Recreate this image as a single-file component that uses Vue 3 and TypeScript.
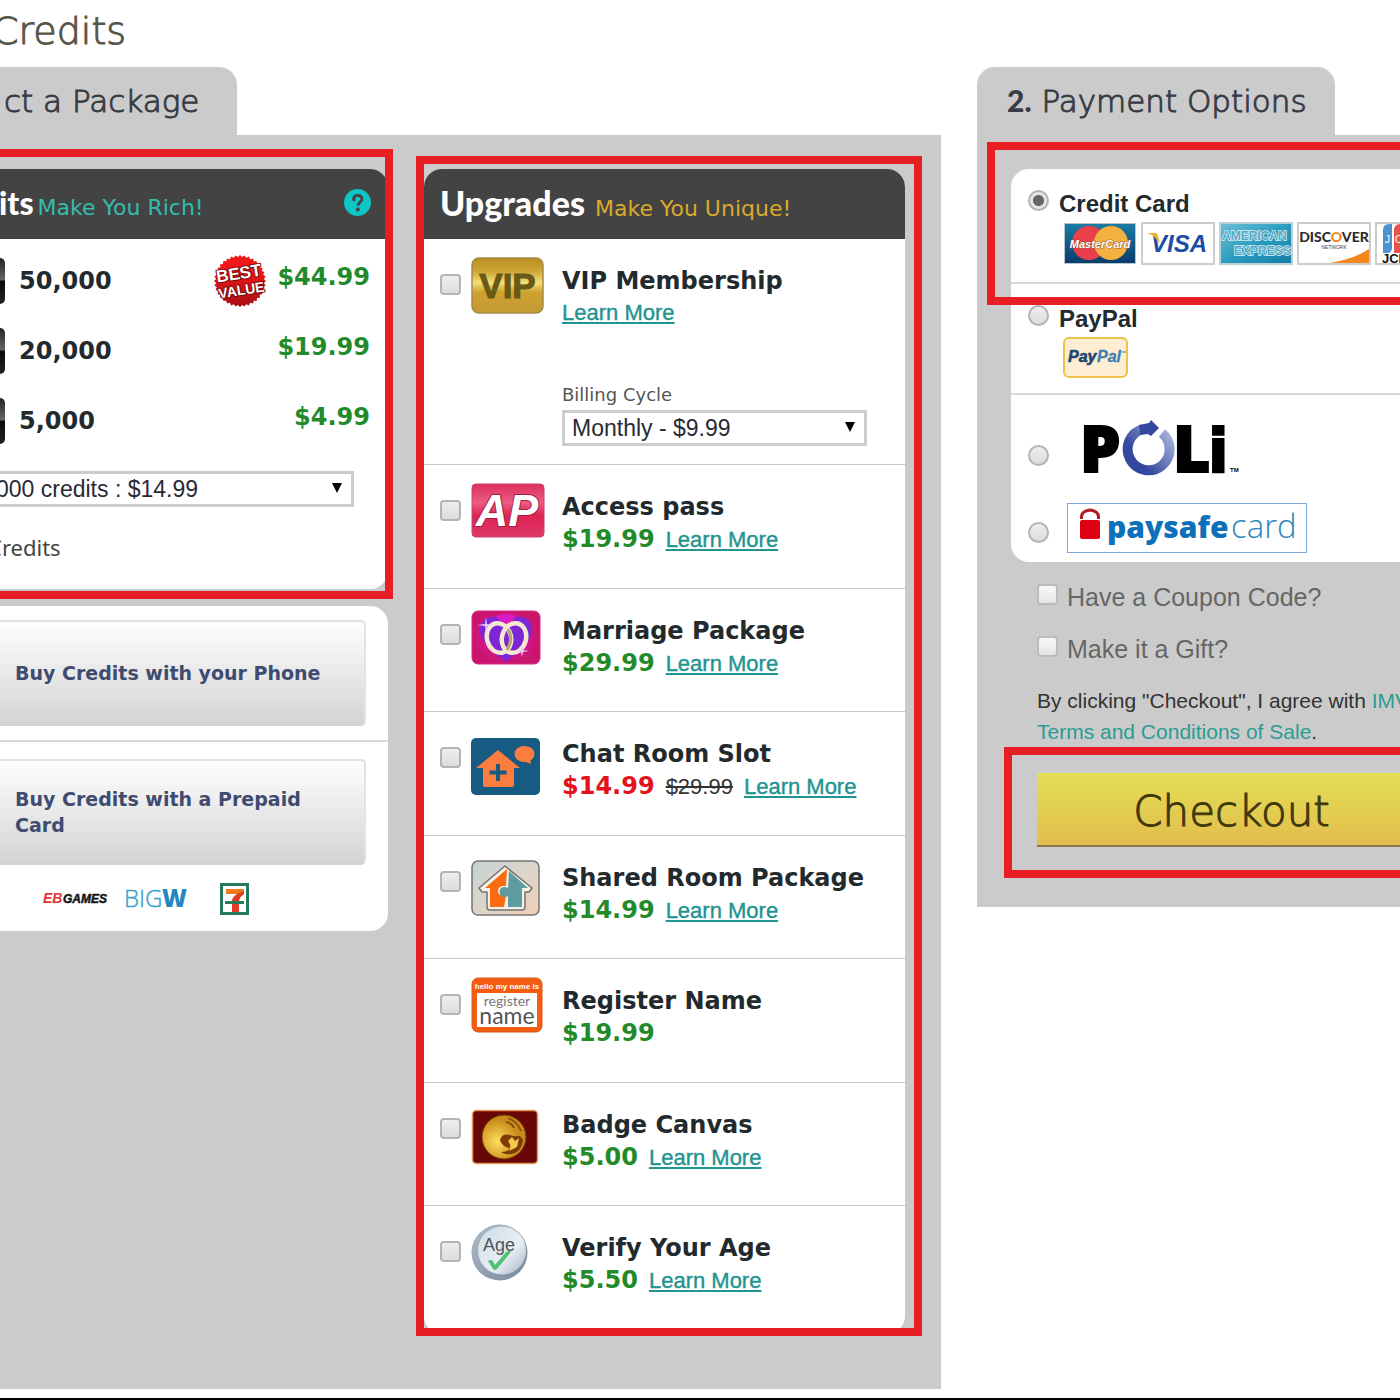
<script setup lang="ts">
import { ref } from 'vue'

interface CreditPack {
  amount: string
  price: string
  best?: boolean
}

interface Upgrade {
  id: string
  name: string
  price?: string
  oldPrice?: string
  more: boolean
  billing?: boolean
}

const packs: CreditPack[] = [
  { amount: '50,000', price: '$44.99', best: true },
  { amount: '20,000', price: '$19.99' },
  { amount: '5,000', price: '$4.99' },
]

const upgrades: Upgrade[] = [
  { id: 'vip', name: 'VIP Membership', more: true, billing: true },
  { id: 'ap', name: 'Access pass', price: '$19.99', more: true },
  { id: 'marriage', name: 'Marriage Package', price: '$29.99', more: true },
  { id: 'chat', name: 'Chat Room Slot', price: '$14.99', oldPrice: '$29.99', more: true },
  { id: 'shared', name: 'Shared Room Package', price: '$14.99', more: true },
  { id: 'register', name: 'Register Name', price: '$19.99', more: false },
  { id: 'badge', name: 'Badge Canvas', price: '$5.00', more: true },
  { id: 'age', name: 'Verify Your Age', price: '$5.50', more: true },
]

const selected = ref<string[]>([])
const method = ref('card')

// Zigzag rim of the "best value" seal
const seal = Array.from({ length: 72 }, (_, i) => {
  const r = i % 2 ? 24 : 26
  const a = (i * Math.PI) / 36
  return `${(27 + r * Math.cos(a)).toFixed(1)},${(27 + r * Math.sin(a)).toFixed(1)}`
}).join(' ')
</script>

<template>
  <div class="page">
    <h1 class="title">Credits</h1>
    <main class="columns">
      <section class="step">
        <h2 class="tab tab-package">ct a Package</h2>
        <div class="panel package">
          <div class="stack">
            <div class="card credits">
              <header class="card-head">
                <h3>its</h3>
                <span class="tag rich">Make You Rich!</span>
                <button class="help" type="button" aria-label="Help">
                  <svg width="27" height="27" viewBox="0 0 27 27">
                    <circle cx="13.5" cy="13.5" r="13.5" fill="#0cc5c4" />
                    <path d="M9.5 10.5C9.5 7.8 11 6.3 13.7 6.3s4.2 1.6 4.2 3.8c0 3-3.900 3.200-3.900 6.600" fill="none" stroke="#434343" stroke-width="2.800" />
                    <circle cx="9.900" cy="10.600" r="1.700" fill="#434343" />
                    <circle cx="13.800" cy="20.600" r="2" fill="#434343" />
                  </svg>
                </button>
              </header>
              <ul class="packs">
                <li v-for="p in packs" :key="p.amount" class="pack">
                  <span class="chip"></span>
                  <span class="amount">{{ p.amount }}</span>
                  <svg v-if="p.best" class="seal" width="54" height="54" viewBox="0 0 54 54">
                    <defs>
                      <linearGradient id="sealFill" x1="0" y1="0" x2="0" y2="1">
                        <stop offset="0.3" stop-color="#f01818" />
                        <stop offset="1" stop-color="#a80d12" />
                      </linearGradient>
                    </defs>
                    <polygon :points="seal" fill="url(#sealFill)" />
                    <g transform="rotate(-9 27 27)" text-anchor="middle" font-family="Liberation Sans, sans-serif" font-weight="bold" fill="#fff" stroke="#7d0a0e" stroke-width="2" paint-order="stroke">
                      <text x="27" y="25" font-size="17">BEST</text>
                      <text x="27" y="41" font-size="14">VALUE</text>
                    </g>
                  </svg>
                  <span class="price pack-price">{{ p.price }}</span>
                </li>
              </ul>
              <div class="select credit-select">
                <select aria-label="Credit amount"><option>000 credits : $14.99</option></select>
              </div>
              <p class="note">Credits</p>
              <div class="frame frame-credits"></div>
            </div>

            <div class="card other">
              <div class="other-row">
                <button class="grey-button" type="button">Buy Credits with your Phone</button>
              </div>
              <div class="other-row prepaid">
                <button class="grey-button" type="button">Buy Credits with a Prepaid Card</button>
                <div class="shops">
                  <svg width="68" height="32" viewBox="0 0 68 32" font-family="Liberation Sans, sans-serif" font-weight="bold" font-style="italic">
                    <text x="0" y="20" font-size="14" fill="#e4343a">EB</text>
                    <text x="20" y="20" font-size="12" fill="#151515" stroke="#151515" stroke-width=".5">GAMES</text>
                  </svg>
                  <svg width="66" height="32" viewBox="0 0 66 32">
                    <text x="0" y="24" font-family="Open Sans, sans-serif" font-weight="300" font-size="24" fill="#3a9fd0" stroke="#3a9fd0" stroke-width=".4">BIG</text>
                    <text x="38" y="24" font-family="Open Sans, sans-serif" font-weight="800" font-size="24" fill="#2587bd">W</text>
                  </svg>
                  <svg class="seven" width="29" height="32" viewBox="0 0 29 32">
                    <rect x="1.500" y="1.500" width="26" height="29" fill="#fff" stroke="#277a5b" stroke-width="3" />
                    <path d="M6 6h18v5c-4 3-5 5-5 8h-7c0-4 2-6 5-8H6z" fill="#f07a1d" />
                    <path d="M24 8v3c-4 3-5 5-5 8h-7c0-4 3-8 12-11z" fill="#e23a24" />
                    <rect x="5" y="18" width="19" height="3" fill="#277a5b" />
                    <rect x="12" y="21" width="7" height="8" fill="#e23a24" />
                  </svg>
                </div>
              </div>
            </div>
          </div>

          <div class="card upgrades">
            <header class="card-head">
              <h3>Upgrades</h3>
              <span class="tag unique">Make You Unique!</span>
            </header>
            <ul class="upgrade-list">
              <li v-for="u in upgrades" :key="u.id" class="upgrade">
                <input :id="u.id" v-model="selected" class="check" type="checkbox" :value="u.id" />
                <svg class="icon" width="74" height="68" viewBox="0 0 74 68">
                  <g v-if="u.id === 'vip'">
                    <defs>
                      <linearGradient id="gold" x1="0" y1="0" x2="0" y2="1">
                        <stop offset="0" stop-color="#b98d22" />
                        <stop offset="0.25" stop-color="#d0a638" />
                        <stop offset="0.45" stop-color="#f3e078" />
                        <stop offset="0.62" stop-color="#cfa12e" />
                        <stop offset="1" stop-color="#c39a34" />
                      </linearGradient>
                    </defs>
                    <rect x="1" y="1" width="71" height="55" rx="7" fill="url(#gold)" stroke="#a58a45" stroke-width="1.500" />
                    <text x="36.500" y="41" text-anchor="middle" font-family="Liberation Sans, sans-serif" font-weight="bold" font-size="35" fill="#665a14" stroke="#665a14" stroke-width="1">VIP</text>
                  </g>
                  <g v-else-if="u.id === 'ap'">
                    <defs>
                      <linearGradient id="pink" x1="0" y1="0" x2="0" y2="1">
                        <stop offset="0" stop-color="#dd2f5c" />
                        <stop offset="0.35" stop-color="#ec5c83" />
                        <stop offset="0.6" stop-color="#dc2453" />
                        <stop offset="1" stop-color="#e03767" />
                      </linearGradient>
                    </defs>
                    <rect x="1" y="1" width="72" height="53" rx="4" fill="url(#pink)" stroke="#c9416b" />
                    <text x="36" y="43" text-anchor="middle" font-family="Liberation Sans, sans-serif" font-weight="bold" font-style="italic" font-size="45" fill="#fff" stroke="#a51c42" stroke-width="2" paint-order="stroke">AP</text>
                  </g>
                  <g v-else-if="u.id === 'marriage'">
                    <defs>
                      <radialGradient id="love">
                        <stop offset="0" stop-color="#e216c8" />
                        <stop offset="1" stop-color="#c9156c" />
                      </radialGradient>
                    </defs>
                    <rect x="1" y="4" width="68" height="53" rx="6" fill="url(#love)" stroke="#d92b84" />
                    <path d="M35 55C17 41 8 32 9 21 11 8 28 6 35 17 42 6 60 8 61 21c1 11-9 20-26 34z" fill="#7c26d6" />
                    <path d="M25 9q10-4 20 0l-9 13z" fill="#d81bc4" />
                    <g fill="none">
                      <ellipse cx="28" cy="31" rx="12" ry="15" stroke="#f4e9d0" stroke-width="4.500" transform="rotate(-15 28 31)" />
                      <ellipse cx="43" cy="31" rx="12" ry="15" stroke="#f4e9d0" stroke-width="4.500" transform="rotate(15 43 31)" />
                      <path d="M37 22q6 10-1 21" stroke="#b9a36d" stroke-width="3" />
                    </g>
                    <path d="M15 10l1 7 8 1-8 1-1 7-1-7-8-1 8-1zM51 38l1 5 6 1-6 1-1 5-1-5-6-1 6-1z" fill="#e9c9ff" />
                  </g>
                  <g v-else-if="u.id === 'chat'">
                    <rect x="0" y="8" width="69" height="57" rx="5" fill="#175a82" />
                    <path d="M27 20L49 38h-6v17q0 2-2 2H14q-2 0-2-2V38H5z" fill="#fb7d3f" />
                    <path d="M27 34v17M18.500 42.500h17" stroke="#175a82" stroke-width="4" />
                    <ellipse cx="53.500" cy="24" rx="10" ry="8" fill="#fb7d3f" />
                    <path d="M52 31l8 3-1-6z" fill="#fb7d3f" />
                  </g>
                  <g v-else-if="u.id === 'shared'">
                    <defs>
                      <linearGradient id="sand" x1="0" y1="0" x2="1" y2="1">
                        <stop offset="0" stop-color="#c3d2d3" />
                        <stop offset="0.5" stop-color="#dcd5ca" />
                        <stop offset="1" stop-color="#f0cdb8" />
                      </linearGradient>
                    </defs>
                    <rect x="1" y="7" width="67" height="54" rx="6" fill="url(#sand)" stroke="#747471" stroke-width="1.500" />
                    <path d="M34 12L61 34l-3 4h-4v15q0 3-3 3H19q-3 0-3-3V38h-5l-3-4z" fill="#f4f1e9" stroke="#73736c" stroke-width="1.500" stroke-linejoin="round" />
                    <path d="M36 15L14 34h5v19h14l2-11h-3a5 5 0 1 1 0-10h3z" fill="#fa6b12" />
                    <path d="M38 17L57 34h-6v19H37V42q-3 2-7 0-3-5 0-8 3-2 7 0z" fill="#5f9c9d" />
                  </g>
                  <g v-else-if="u.id === 'register'">
                    <rect x="1" y="1" width="70" height="54" rx="6" fill="#f45c10" stroke="#d95a18" />
                    <rect x="6" y="16" width="60" height="34" fill="#fff" />
                    <text x="36" y="12" text-anchor="middle" font-family="Liberation Sans, sans-serif" font-weight="bold" font-size="8" fill="#fff">hello my name is</text>
                    <text x="36" y="29" text-anchor="middle" font-family="Lato, sans-serif" font-size="14" fill="#777">register</text>
                    <text x="36" y="47" text-anchor="middle" font-family="Lato, sans-serif" font-size="23" fill="#555">name</text>
                  </g>
                  <g v-else-if="u.id === 'badge'">
                    <defs>
                      <radialGradient id="coin" cx=".35" cy=".6">
                        <stop offset="0" stop-color="#ffdf5e" />
                        <stop offset="1" stop-color="#c98a1a" />
                      </radialGradient>
                    </defs>
                    <rect x="1.500" y="9.500" width="65" height="53" rx="4" fill="#690707" stroke="#e39a55" stroke-width="1.500" />
                    <circle cx="33" cy="36" r="22" fill="url(#coin)" stroke="#6b3c05" />
                    <path d="M29 39q2-7 10-5 5 2 10 1l3 4q-1 9-8 13-9 3-14-1 7 0 9-4-8-1-10-8z" fill="#7c3b07" />
                    <path d="M37 17q9 3 13 13M35 21q6 1 8 6" fill="none" stroke="#87500d" stroke-width="1.800" />
                    <path d="M37 40l4-4 3 4 4-3-2 9-8 4q3-5-1-10z" fill="#f6c94c" />
                  </g>
                  <g v-else>
                    <defs>
                      <linearGradient id="steel" x1="0" y1="0" x2="1" y2="1">
                        <stop offset="0" stop-color="#aebdc9" />
                        <stop offset="1" stop-color="#76889a" />
                      </linearGradient>
                      <linearGradient id="ice" x1="0" y1="0" x2="1" y2="1">
                        <stop offset="0" stop-color="#cfdce9" />
                        <stop offset="0.6" stop-color="#e8eef4" />
                        <stop offset="1" stop-color="#a5b5c5" />
                      </linearGradient>
                    </defs>
                    <circle cx="28.500" cy="28.500" r="28" fill="url(#steel)" />
                    <circle cx="31" cy="26.500" r="24" fill="url(#ice)" />
                    <text x="28" y="27" text-anchor="middle" font-family="Liberation Sans, sans-serif" font-size="18" fill="#4e565e">Age</text>
                    <path d="M17 37q3-2 5 0l2 4L35 28q3-2 5 0L26 45q-2 2-4 0z" fill="#4fc373" />
                  </g>
                </svg>
                <div class="info">
                  <label class="name" :for="u.id">{{ u.name }}</label>
                  <div class="buy">
                    <span v-if="u.price" class="price" :class="{ sale: u.oldPrice }">{{ u.price }}</span>
                    <s v-if="u.oldPrice" class="old">{{ u.oldPrice }}</s>
                    <a v-if="u.more" class="more" href="#">Learn More</a>
                  </div>
                  <template v-if="u.billing">
                    <label class="billing-label" for="cycle">Billing Cycle</label>
                    <div class="select">
                      <select id="cycle"><option>Monthly - $9.99</option></select>
                    </div>
                  </template>
                </div>
              </li>
            </ul>
            <div class="frame frame-upgrades"></div>
          </div>
        </div>
      </section>

      <section class="step">
        <h2 class="tab tab-payment"><b>2.</b> Payment Options</h2>
        <div class="panel payment">
          <div class="methods">
            <div class="method">
              <input id="m-card" v-model="method" class="radio" type="radio" value="card" />
              <div class="method-body">
                <label for="m-card">Credit Card</label>
                <div class="brands">
                  <svg width="74" height="43" viewBox="0 0 74 43">
                    <defs>
                      <linearGradient id="mc" x1="0" y1="0" x2="0" y2="1">
                        <stop offset="0" stop-color="#1b7ba5" />
                        <stop offset="1" stop-color="#093d6b" />
                      </linearGradient>
                    </defs>
                    <rect x="1.500" y="1.500" width="71" height="40" fill="url(#mc)" stroke="#b9c6cf" />
                    <circle cx="26" cy="21" r="17" fill="#e93f4a" />
                    <circle cx="48" cy="21" r="17" fill="#f5b140" />
                    <text x="37" y="26" text-anchor="middle" font-family="Liberation Sans, sans-serif" font-weight="bold" font-style="italic" font-size="11" fill="#fff" stroke="#9d5538" stroke-width="1" paint-order="stroke">MasterCard</text>
                  </svg>
                  <svg width="74" height="43" viewBox="0 0 74 43">
                    <rect x="1" y="1" width="72" height="41" fill="#fff" stroke="#ccc" stroke-width="2" />
                    <text x="38" y="30" text-anchor="middle" font-family="Liberation Sans, sans-serif" font-weight="bold" font-style="italic" font-size="24" fill="#1c4ba8">VISA</text>
                    <path d="M6 11h10l3 10-4-4q-2-4-9-6z" fill="#f0b429" />
                  </svg>
                  <svg width="74" height="43" viewBox="0 0 74 43">
                    <defs>
                      <linearGradient id="amex" x1="0" y1="0" x2="1" y2="1">
                        <stop offset="0" stop-color="#6ec0d6" />
                        <stop offset="0.5" stop-color="#2b9dbf" />
                        <stop offset="1" stop-color="#147ca9" />
                      </linearGradient>
                    </defs>
                    <rect x="1" y="1" width="72" height="41" fill="url(#amex)" stroke="#bcd0d8" stroke-width="2" />
                    <g font-family="Liberation Sans, sans-serif" font-weight="bold" font-size="12" fill="#55a9c7" stroke="#d9eff6" stroke-width="1.500" paint-order="stroke">
                      <text x="3" y="18">AMERICAN</text>
                      <text x="15" y="33">EXPRESS</text>
                    </g>
                  </svg>
                  <svg width="74" height="43" viewBox="0 0 74 43">
                    <rect x="1" y="1" width="72" height="41" fill="#fff" stroke="#ccc" stroke-width="2" />
                    <path d="M33 41q24-4 39-14v14z" fill="#f5861c" />
                    <text x="37" y="20" text-anchor="middle" font-family="Lato, sans-serif" font-weight="900" font-size="14" fill="#2d2d2d">DISC<tspan fill="#f5861c">O</tspan>VER</text>
                    <text x="37" y="27" text-anchor="middle" font-family="Liberation Sans, sans-serif" font-size="5" fill="#444">NETWORK</text>
                  </svg>
                  <svg width="74" height="43" viewBox="0 0 74 43">
                    <rect x="1" y="1" width="72" height="41" fill="#fff" stroke="#ccc" stroke-width="2" />
                    <path d="M8 31V8q0-6 6-6h3v24q0 5-5 5z" fill="#4d94cf" />
                    <path d="M19 31V8q0-6 7-6h3v24q0 5-5 5z" fill="#e8534b" />
                    <path d="M31 31V8q0-6 7-6h3v24q0 5-5 5z" fill="#4fae55" />
                    <text x="7" y="41" font-family="Liberation Sans, sans-serif" font-weight="bold" font-size="13" fill="#111">JCB</text>
                    <text x="10" y="21" font-family="Liberation Sans, sans-serif" font-size="10" fill="#fff">J</text>
                    <text x="20" y="21" font-family="Liberation Sans, sans-serif" font-size="10" fill="#fff">C</text>
                  </svg>
                </div>
              </div>
              <div class="frame frame-card"></div>
            </div>
            <div class="method paypal">
              <input id="m-paypal" v-model="method" class="radio" type="radio" value="paypal" />
              <div class="method-body">
                <label for="m-paypal">PayPal</label>
                <svg class="paypal-logo" width="65" height="41" viewBox="0 0 65 41">
                  <rect x="1" y="1" width="63" height="39" rx="5" fill="#fdeed3" stroke="#efc14d" stroke-width="2" />
                  <g font-family="Liberation Sans, sans-serif" font-weight="bold" font-style="italic" font-size="16">
                    <text x="5" y="25" fill="#1c4771" stroke="#1c4771" stroke-width=".6">Pay</text>
                    <text x="34" y="25" fill="#3d7fae" stroke="#3d7fae" stroke-width=".3">Pal</text>
                  </g>
                  <path d="M59 15h4" stroke="#3d7fae" />
                </svg>
              </div>
            </div>
            <div class="method poli">
              <input id="m-poli" v-model="method" class="radio" type="radio" value="poli" aria-label="POLi" />
              <svg width="158" height="60" viewBox="0 0 158 60">
                <defs>
                  <linearGradient id="ring" gradientUnits="userSpaceOnUse" x1="50" y1="50" x2="88" y2="20">
                    <stop offset="0.2" stop-color="#35489f" />
                    <stop offset="1" stop-color="#a3afd8" />
                  </linearGradient>
                </defs>
                <g font-family="Open Sans, sans-serif" font-weight="800" font-size="64" fill="#000" stroke="#000" stroke-width="2">
                  <text x="-3" y="55">P</text>
                  <text x="90" y="55">L</text>
                </g>
                <text x="125" y="55" font-family="DejaVu Sans, sans-serif" font-weight="bold" font-size="60" stroke="#000" stroke-width="2">i</text>
                <path d="M79 16A21 21 0 1 1 60 12" fill="none" stroke="url(#ring)" stroke-width="10" />
                <path d="M56 8l10-2 2-3 8 8-8 8-3-2-8 1z" fill="#35489f" />
                <text x="147" y="55" font-family="Liberation Sans, sans-serif" font-weight="bold" font-size="6">TM</text>
              </svg>
            </div>
            <div class="method paysafe">
              <input id="m-paysafe" v-model="method" class="radio" type="radio" value="paysafe" aria-label="paysafecard" />
              <svg width="240" height="50" viewBox="0 0 240 50">
                <rect x=".5" y=".5" width="239" height="49" fill="#fff" stroke="#7ba9da" />
                <rect x="13" y="17" width="20" height="19" rx="2" fill="#de0012" />
                <path d="M14.500 16v-2q0-6 8.500-7 8.500 1 8.500 7v2" fill="none" stroke="#b51a24" stroke-width="3" />
                <text x="40" y="35" font-family="Open Sans, sans-serif" font-weight="800" font-size="30" fill="#0c71ba">paysafe</text>
                <text x="164" y="35" font-family="Open Sans, sans-serif" font-weight="300" font-size="33" fill="#2c86bb">card</text>
              </svg>
            </div>
          </div>
          <div class="extras">
            <label class="extra"><input class="check pale" type="checkbox" /><span>Have a Coupon Code?</span></label>
            <label class="extra"><input class="check pale" type="checkbox" /><span>Make it a Gift?</span></label>
            <p class="terms">By clicking "Checkout", I agree with <a href="#">IMVU Terms and Conditions of Sale</a>.</p>
            <div class="checkout-wrap">
              <button class="checkout" type="button">Checkout</button>
              <div class="frame frame-checkout"></div>
            </div>
          </div>
        </div>
      </section>
    </main>
  </div>
</template>

<style>
body {
  margin: 0;
  background: #fff;
}
</style>

<style scoped>
* {
  box-sizing: border-box;
}
.page {
  overflow: hidden;
  padding-bottom: 9px;
  border-bottom: 2px solid #000;
  font-family: "Liberation Sans", sans-serif;
  color: #222a2e;
}
h1, h2, h3, p, ul {
  margin: 0;
  padding: 0;
  list-style: none;
}
svg {
  display: block;
  flex: none;
}
.title, .tab, .checkout {
  -webkit-text-stroke: 1px;
}
.title {
  margin-left: -8px;
  padding-bottom: 5px;
  font: 200 38px/62px "DejaVu Sans", sans-serif;
  color: #57544a;
}
.columns {
  display: grid;
  grid-template-columns: minmax(0, 941fr) minmax(0, 423fr);
  gap: 36px;
  align-items: start;
}
.tab {
  width: fit-content;
  background: #cbcbcb;
  font: 200 31px/68px "DejaVu Sans", sans-serif;
  white-space: nowrap;
  color: #383c44;
}
.tab-package {
  padding: 0 38px 0 4px;
  border-top-right-radius: 18px;
}
.tab-payment {
  padding: 0 28px 0 30px;
  border-radius: 18px 18px 0 0;
}
.tab b {
  font: 900 30px "Lato", sans-serif;
  -webkit-text-stroke: 0;
}
.panel {
  background: #cbcbcb;
}
.package {
  display: grid;
  grid-template-columns: minmax(0, 388fr) minmax(0, 481fr);
  gap: 36px;
  align-items: start;
  padding: 34px 36px 55px 0;
}
.stack {
  display: grid;
  gap: 17px;
}
.card {
  position: relative;
  background: #fff;
}
.credits, .other {
  border-radius: 0 18px 18px 0;
}
.upgrades {
  border-radius: 18px;
}
.card-head {
  display: flex;
  align-items: baseline;
  gap: 10px;
  height: 70px;
  background: #434343;
  line-height: 68px;
}
.credits .card-head {
  gap: 4px;
  border-top-right-radius: 18px;
}
.upgrades .card-head {
  padding-left: 16px;
  border-radius: 18px 18px 0 0;
}
.card-head h3 {
  font: 900 34px/68px "Lato", sans-serif;
  color: #fff;
}
.card-head .tag {
  font: 22px/64px "DejaVu Sans", sans-serif;
}
.credits .card-head h3 {
  margin-left: -1px;
  font-size: 32px;
}
.rich {
  color: #34bcae;
}
.unique {
  color: #dba92c;
}
.help {
  margin-left: auto;
  margin-right: 17px;
  padding: 0 0 4px;
  border: 0;
  background: none;
  align-self: center;
}
.packs {
  padding-top: 7px;
}
.pack {
  display: flex;
  align-items: center;
  height: 70px;
  padding-right: 18px;
}
.chip {
  width: 5px;
  height: 46px;
  margin-right: 14px;
  border-radius: 0 8px 8px 0;
  background: linear-gradient(#222, #666 48%, #0a0a0a 50%, #222);
}
.amount, .price, .name {
  font: 700 24px/32px "DejaVu Sans", sans-serif;
}
.price {
  color: #238a2a;
}
.sale {
  color: #e3131b;
}
.seal {
  margin-left: auto;
}
.pack-price {
  margin-left: auto;
  padding-bottom: 8px;
}
.seal + .pack-price {
  margin-left: 10px;
}
.select {
  position: relative;
}
.select::after {
  content: "";
  position: absolute;
  top: 12px;
  right: 12px;
  border: solid transparent;
  border-width: 10px 5px 0;
  border-top-color: #000;
  pointer-events: none;
}
select {
  display: block;
  width: 100%;
  height: 36px;
  padding: 0 7px;
  border: 3px solid #ccc;
  border-radius: 0;
  background: #fff;
  appearance: none;
  font: 23px "Liberation Sans", sans-serif;
  color: #2a2a35;
}
.credit-select {
  margin: 15px 34px 0 -14px;
}
.note {
  margin-left: -12px;
  padding: 24px 0 26px;
  font: 22px/32px "Noto Sans", sans-serif;
  color: #444;
}
.frame {
  position: absolute;
  z-index: 2;
  border: 8px solid #e81e25;
  pointer-events: none;
}
.frame-credits {
  inset: -20px -5px -10px -20px;
}
.frame-upgrades {
  inset: -13px -17px -2px -8px;
}
.frame-card {
  inset: -27px -20px -23px -24px;
}
.frame-checkout {
  inset: -26px -20px -31px -33px;
}
.other-row {
  padding: 14px 22px 14px 0;
}
.prepaid {
  padding: 17px 22px 16px 0;
  border-top: 2px solid #d8d8d8;
}
.grey-button {
  display: block;
  width: 100%;
  height: 106px;
  padding: 0 20px 0 15px;
  border: 2px solid #e2e2e2;
  border-left: 0;
  border-bottom-color: #d2d2d2;
  border-radius: 0 5px 5px 0;
  background: linear-gradient(#fefefe, #d4d4d4);
  font: 700 19px/26px "DejaVu Sans", sans-serif;
  text-align: left;
  color: #404b70;
}
.shops {
  display: flex;
  gap: 13px;
  padding: 18px 0 0 43px;
}
.seven {
  margin-left: 17px;
}
.upgrade {
  display: flex;
  align-items: flex-start;
  height: 124px;
  padding: 0 38px 0 16px;
  border-top: 1px solid #c8c8c8;
}
.upgrade:nth-child(odd) {
  height: 123px;
}
.upgrade:first-child {
  height: 225px;
  border-top: 0;
}
.upgrade:last-child {
  height: 129px;
}
.check, .radio {
  flex: none;
  width: 21px;
  height: 21px;
  margin: 0;
  border: 2px solid #b4b4b4;
  background: linear-gradient(#eee, #dcdcdc);
  appearance: none;
}
.check {
  border-radius: 4px;
}
.upgrade .check {
  margin-top: 35px;
}
.check:checked {
  background: #777;
}
.pale {
  border-color: #bbb;
  background: linear-gradient(#f8f8f8, #e4e4e4);
}
.radio {
  border-radius: 50%;
}
.radio:checked {
  background: radial-gradient(circle, #666 5px, #e4e4e4 6px);
}
.icon {
  margin: 18px 17px 0 10px;
}
.info {
  flex: 1;
  padding-top: 26px;
}
.name {
  display: block;
  white-space: nowrap;
}
.buy {
  display: flex;
  align-items: baseline;
  gap: 11px;
  height: 32px;
  line-height: 32px;
}
.more {
  font-size: 22px;
  color: #1f9490;
  -webkit-text-stroke: 0.4px;
}
.old {
  font-size: 22px;
  color: #333;
}
.billing-label {
  display: block;
  margin: 54px 0 3px;
  font: 18px/24px "DejaVu Sans", sans-serif;
  color: #555;
}
.payment {
  padding: 34px 0 60px 34px;
}
.methods {
  background: #fff;
  border-radius: 18px 0 0 18px;
}
.method {
  position: relative;
  display: flex;
  align-items: flex-start;
  gap: 10px;
  height: 115px;
  padding: 19px 0 0 17px;
  border-bottom: 2px solid #d8d8d8;
}
.method .radio {
  margin-top: 2px;
}
.method label {
  display: block;
  font-weight: 700;
  font-size: 24px;
  line-height: 32px;
}
.brands {
  display: flex;
  gap: 4px;
  margin: 2px 0 0 4px;
}
.paypal {
  height: 111px;
}
.paypal-logo {
  margin: 2px 0 0 4px;
}
.method.poli {
  align-items: center;
  gap: 34px;
  height: 104px;
  padding: 0 0 0 17px;
  border: 0;
}
.method.paysafe {
  gap: 18px;
  height: 63px;
  padding: 4px 0 0 17px;
  border: 0;
}
.poli .radio {
  margin-top: 16px;
}
.paysafe .radio {
  margin-top: 19px;
}
.extras {
  padding: 19px 0 0 26px;
}
.extra {
  display: flex;
  gap: 9px;
  height: 52px;
  padding-top: 3px;
  font-size: 25px;
  line-height: 26px;
  color: #666;
}
.terms {
  margin-right: -60px;
  font-size: 21px;
  line-height: 31px;
  color: #333;
}
.terms a {
  color: #2a9c93;
  text-decoration: none;
}
.checkout-wrap {
  position: relative;
  margin-top: 26px;
}
.checkout {
  display: block;
  width: calc(100% + 26px);
  height: 74px;
  padding: 6px 0 0;
  border: 0;
  border-bottom: 2px solid #8b7a4c;
  background: linear-gradient(#e4df55, #e2bd4c);
  font: 200 42px/64px "DejaVu Sans", sans-serif;
  color: #40370e;
}
</style>
